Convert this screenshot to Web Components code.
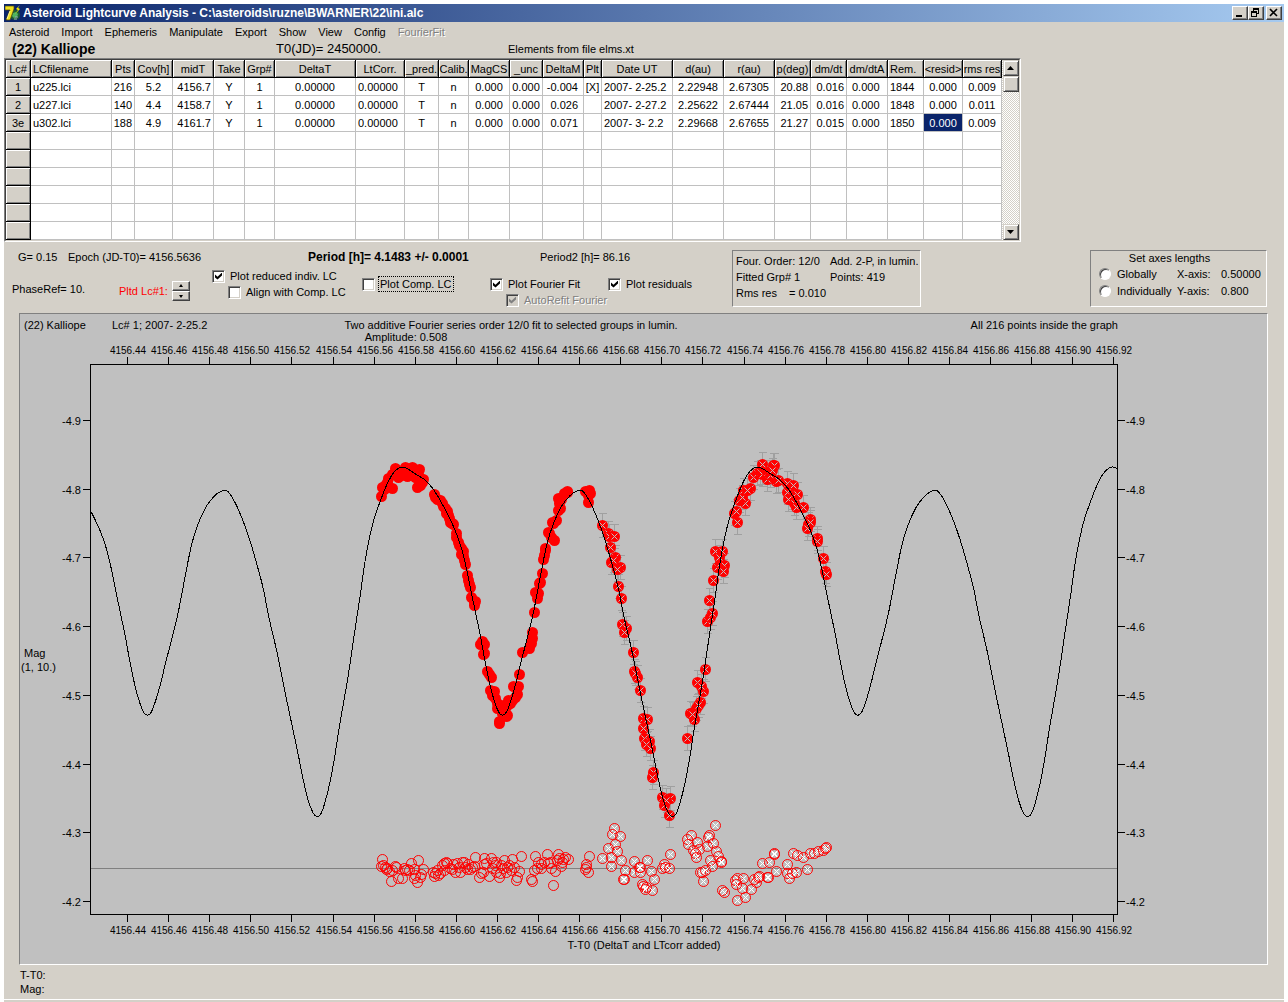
<!DOCTYPE html>
<html lang="en">
<head>
<meta charset="utf-8">
<title>Asteroid Lightcurve Analysis</title>
<style>
  body {
    margin: 0;
    padding: 4px 4px 0;
    background: #fff;
    color: #000;
    font: 11px/14px "Liberation Sans", Arial, sans-serif;
  }
</style>
</head>
<body>
<app-window>
  <title-bar>Asteroid Lightcurve Analysis - C:\asteroids\ruzne\BWARNER\22\ini.alc</title-bar>
  <menu-bar></menu-bar>
  <object-header></object-header>
  <lc-grid></lc-grid>
  <fit-controls></fit-controls>
  <lightcurve-plot></lightcurve-plot>
  <cursor-status></cursor-status>
</app-window>

<script>
// Shared base: renders once into an open shadow root
class BaseElement extends HTMLElement {
  constructor() {
    super();
    this.attachShadow({ mode: "open" });
  }

  connectedCallback() {
    this.shadowRoot.innerHTML = this.template();
  }
}

class AppWindow extends BaseElement {
  template() {
    return `
      <style>
        :host {
          display: flex;
          flex-direction: column;
          background: #d4d0c8;
          padding-bottom: 2px;
        }
      </style>
      <slot></slot>
    `;
  }
}

class TitleBar extends BaseElement {
  template() {
    return `
      <style>
        :host {
          display: flex;
          align-items: center;
          height: 18px;
          padding: 0 2px 0 1px;
          background: linear-gradient(to right, #0a246a, #a6caf0);
          color: #fff;
        }
        .icon { width: 16px; height: 16px; margin-right: 2px; }
        h1 {
          flex: 1;
          margin: 0;
          font: bold 12px/18px "Liberation Sans", Tahoma, sans-serif;
          white-space: nowrap;
        }
        button {
          width: 16px;
          height: 14px;
          padding: 0;
          border: 1px solid;
          border-color: #fff #404040 #404040 #fff;
          box-shadow: inset -1px -1px #808080;
          background: #d4d0c8;
        }
        button svg { display: block; width: 14px; height: 12px; }
        .close { margin-left: 2px; }
      </style>
      <svg class="icon" viewBox="0 0 16 16" aria-hidden="true">
        <circle cx="10" cy="10" r="5" fill="#1c5a34"/>
        <path d="M8 8l3-1 2 2-1 3-3 1-2-2z" fill="#4fb35e"/>
        <path d="M10 12h3M9 14h3" stroke="#9ab" />
        <path d="M0 1h9v3L5 15H1L5 5H0z" fill="#f0e020" stroke="#50480c" stroke-width=".7"/>
        <path d="M5 6L2 14" stroke="#fff7a0"/>
        <path d="M15 0l-4 4 2 1-3 4 5-5-2-1z" fill="#fff200"/>
      </svg>
      <h1><slot></slot></h1>
      <button type="button" aria-label="Minimize"><svg viewBox="0 0 14 12"><path d="M3 8h6v2H3z"/></svg></button>
      <button type="button" aria-label="Restore"><svg viewBox="0 0 14 12" fill-rule="evenodd"><path d="M4 1h6v6H8V6h1V3H5v1H4zM2 4h6v6H2zM3 6v3h4V6z"/></svg></button>
      <button type="button" aria-label="Close" class="close"><svg viewBox="0 0 14 12"><path d="M3 2l7 7M10 2L3 9" stroke="#000" stroke-width="1.6"/></svg></button>
    `;
  }
}

const MENUS = ["Asteroid", "Import", "Ephemeris", "Manipulate", "Export", "Show", "View", "Config", "FourierFit"];

class MenuBar extends BaseElement {
  template() {
    const items = MENUS.map((name) => `<button type="button"${name === "FourierFit" ? " disabled" : ""}>${name}</button>`);
    return `
      <style>
        :host { display: flex; height: 18px; padding-top: 2px; box-sizing: border-box; }
        nav { display: flex; align-items: center; }
        button {
          padding: 0 6px;
          border: 0;
          background: none;
          color: #000;
          font: inherit;
        }
        button:first-child { padding-left: 5px; }
        button:disabled { color: #808080; text-shadow: 1px 1px #fff; }
      </style>
      <nav>${items.join("")}</nav>
    `;
  }
}

class ObjectHeader extends BaseElement {
  template() {
    return `
      <style>
        :host {
          display: grid;
          grid-template-columns: 264px 232px 1fr;
          align-items: center;
          height: 18px;
          padding-left: 8px;
        }
        h2 { margin: 0; font: bold 14px/18px "Liberation Sans", Arial, sans-serif; }
        .epoch { font-size: 13px; line-height: 18px; }
      </style>
      <h2>(22) Kalliope</h2>
      <span class="epoch">T0(JD)= 2450000.</span>
      <span>Elements from file elms.xt</span>
    `;
  }
}

// [header, width, alignment class]
const COLUMNS = [
  ["Lc#", 25, ""],
  ["LCfilename", 81, "left"],
  ["Pts", 23, "right"],
  ["Cov[h]", 38, ""],
  ["midT", 41, "right"],
  ["Take", 31, ""],
  ["Grp#", 30, ""],
  ["DeltaT", 81, ""],
  ["LtCorr.", 49, "left"],
  ["_pred.", 34, ""],
  ["Calib.", 30, ""],
  ["MagCS", 41, ""],
  ["_unc", 33, ""],
  ["DeltaM", 41, "inset-right"],
  ["Plt", 18, ""],
  ["Date UT", 71, "left"],
  ["d(au)", 51, ""],
  ["r(au)", 51, ""],
  ["p(deg)", 36, "right"],
  ["dm/dt", 36, "right"],
  ["dm/dtA", 41, "inset-left"],
  ["Rem.", 36, "left"],
  ["&lt;resid&gt;", 39, ""],
  ["rms res", 39, ""],
];

const ROWS = [
  ["1", "u225.lci", "216", "5.2", "4156.7", "Y", "1", "0.00000", "0.00000", "T", "n", "0.000", "0.000", "-0.004", "[X]", "2007- 2-25.2", "2.22948", "2.67305", "20.88", "0.016", "0.000", "1844", "0.000", "0.009"],
  ["2", "u227.lci", "140", "4.4", "4158.7", "Y", "1", "0.00000", "0.00000", "T", "n", "0.000", "0.000", "0.026", "", "2007- 2-27.2", "2.25622", "2.67444", "21.05", "0.016", "0.000", "1848", "0.000", "0.011"],
  ["3e", "u302.lci", "188", "4.9", "4161.7", "Y", "1", "0.00000", "0.00000", "T", "n", "0.000", "0.000", "0.071", "", "2007- 3- 2.2", "2.29668", "2.67655", "21.27", "0.015", "0.000", "1850", "0.000", "0.009"],
];
const EMPTY_ROWS = 6;
const SELECTED = { row: 2, col: 22 };

class LcGrid extends BaseElement {
  template() {
    const rows = ROWS.concat(Array.from({ length: EMPTY_ROWS }, () => COLUMNS.map(() => "")));
    const cell = (text, r, c) => {
      if (c === 0) return `<th scope="row">${text}</th>`;
      const selected = r === SELECTED.row && c === SELECTED.col ? " selected" : "";
      return `<td class="${COLUMNS[c][2]}${selected}">${text}</td>`;
    };
    return `
      <style>
        :host { display: flex; }
        .frame {
          border: 1px solid;
          border-color: #808080 #fff #fff #808080;
        }
        .inner {
          display: flex;
          border: 1px solid;
          border-color: #404040 #d4d0c8 #d4d0c8 #404040;
          background: #fff;
        }
        table {
          table-layout: fixed;
          width: 996px;
          border-spacing: 0;
          line-height: 16px;
        }
        th, td {
          box-sizing: border-box;
          height: 18px;
          padding: 0;
          font-weight: normal;
          text-align: center;
          white-space: nowrap;
          overflow: hidden;
          border: solid #c0c0c0;
          border-width: 0 1px 1px 0;
        }
        th {
          background: #d4d0c8;
          border-color: #000;
          box-shadow: inset 1px 1px #fff, inset -1px -1px #808080;
        }
        .left { text-align: left; padding-left: 2px; }
        .right { text-align: right; padding-right: 2px; }
        .inset-left { text-align: left; padding-left: 5px; }
        .inset-right { text-align: right; padding-right: 5px; }
        .selected { background: #0a246a; color: #fff; }
        th.head-left { text-align: left; padding-left: 2px; }
      </style>
      <div class="frame"><div class="inner">
        <table>
          <colgroup>${COLUMNS.map(([, width]) => `<col style="width:${width}px">`).join("")}</colgroup>
          <thead><tr>${COLUMNS.map(([name]) => `<th scope="col"${name === "LCfilename" || name === "Rem." ? ' class="head-left"' : ""}>${name}</th>`).join("")}</tr></thead>
          <tbody>${rows.map((row, r) => `<tr>${row.map((text, c) => cell(text, r, c)).join("")}</tr>`).join("")}</tbody>
        </table>
        <scroll-bar></scroll-bar>
      </div></div>
    `;
  }
}

class ScrollBar extends BaseElement {
  template() {
    return `
      <style>
        :host {
          display: flex;
          flex-direction: column;
          width: 16px;
          padding-left: 1px;
          background: repeating-conic-gradient(#fff 0 25%, #d4d0c8 0 50%) 0 0 / 2px 2px;
        }
        button, .thumb {
          box-sizing: border-box;
          width: 16px;
          height: 16px;
          padding: 0;
          border: 1px solid;
          border-color: #d4d0c8 #404040 #404040 #d4d0c8;
          box-shadow: inset 1px 1px #fff, inset -1px -1px #808080;
          background: #d4d0c8;
        }
        svg { display: block; width: 14px; height: 14px; }
        .down { margin-top: auto; }
      </style>
      <button type="button" aria-label="Scroll up"><svg viewBox="0 0 14 14"><path d="M3 9h7L6.500 5z"/></svg></button>
      <div class="thumb"></div>
      <button type="button" class="down" aria-label="Scroll down"><svg viewBox="0 0 14 14"><path d="M3 5h7L6.500 9z"/></svg></button>
    `;
  }
}

class CheckBox extends BaseElement {
  template() {
    const checked = this.hasAttribute("checked") ? "checked" : "";
    const disabled = this.hasAttribute("disabled") ? "disabled" : "";
    return `
      <style>
        :host { display: block; height: 16px; white-space: nowrap; }
        label { display: flex; align-items: center; gap: 4px; }
        input {
          appearance: none;
          box-sizing: border-box;
          width: 13px;
          height: 13px;
          margin: 0;
          border: 1px solid;
          border-color: #808080 #fff #fff #808080;
          box-shadow: inset 1px 1px #404040, inset -1px -1px #d4d0c8;
          background: #fff;
        }
        input:checked::before {
          content: "";
          display: block;
          width: 7px;
          height: 7px;
          margin: 2px;
          background: #000;
          clip-path: polygon(0 28%, 36% 62%, 100% 0, 100% 43%, 36% 100%, 0 71%);
        }
        input:disabled { background: #d4d0c8; }
        input:disabled::before { background: #808080; }
        span { padding: 0 1px; }
        input:disabled + span { color: #808080; text-shadow: 1px 1px #fff; }
        :host([focused]) span { outline: 1px dotted #000; }
      </style>
      <label><input type="checkbox" ${checked} ${disabled}><span><slot></slot></span></label>
    `;
  }
}

class GroupPanel extends BaseElement {
  template() {
    return `
      <style>
        :host {
          display: block;
          box-sizing: border-box;
          height: 57px;
          border: 1px solid;
          border-color: #808080 #fff #fff #808080;
          white-space: nowrap;
        }
      </style>
      <slot></slot>
    `;
  }
}

class SpinButtons extends BaseElement {
  template() {
    return `
      <style>
        :host { display: grid; width: 18px; }
        button {
          height: 10px;
          padding: 0;
          border: 1px solid;
          border-color: #fff #404040 #404040 #fff;
          box-shadow: inset -1px -1px #808080;
          background: #d4d0c8;
        }
        svg { display: block; width: 16px; height: 8px; }
      </style>
      <button type="button" aria-label="Next lightcurve"><svg viewBox="0 0 16 8"><path d="M6 5h4L8 2z"/></svg></button>
      <button type="button" aria-label="Previous lightcurve"><svg viewBox="0 0 16 8"><path d="M6 3h4L8 6z"/></svg></button>
    `;
  }
}

class FitControls extends BaseElement {
  template() {
    return `
      <style>
        :host {
          display: flex;
          align-items: flex-start;
          height: 63px;
          padding: 8px 17px 0 8px;
          white-space: nowrap;
        }
        .left { width: 720px; }
        .values {
          display: grid;
          grid-template-columns: 50px 240px 232px 1fr;
          padding-left: 6px;
        }
        .values b { font-size: 12px; }
        .options {
          display: grid;
          grid-template-columns: 107px 93px 150px 128px 118px 1fr;
          padding-top: 5px;
        }
        .lower { padding-top: 8px; }
        .indent { margin-left: 16px; }
        .phase { padding-top: 13px; }
        .picker {
          display: flex;
          align-items: center;
          align-self: start;
          gap: 4px;
          padding-top: 12px;
          color: #f00;
        }
        .axes { width: 177px; margin-left: auto; }
        .fit { width: 189px; }
        .fit div {
          display: grid;
          grid-template-columns: 94px 1fr;
          padding: 2px 0 0 3px;
          line-height: 16px;
        }
        .fit .rms { grid-template-columns: 53px 1fr; padding-top: 0; }
        .title { text-align: center; padding-right: 18px; }
        .row {
          display: grid;
          grid-template-columns: 78px 44px 1fr;
          align-items: center;
          height: 17px;
          padding-left: 8px;
        }
        .row label { display: flex; align-items: center; gap: 6px; }
        input {
          appearance: none;
          box-sizing: border-box;
          width: 12px;
          height: 12px;
          margin: 0;
          border: 1px solid;
          border-color: #808080 #fff #fff #808080;
          border-radius: 50%;
          box-shadow: inset 1px 1px #404040;
          background: #fff;
        }
      </style>
      <div class="left">
        <div class="values">
          <span>G= 0.15</span>
          <span>Epoch (JD-T0)= 4156.5636</span>
          <b>Period [h]= 4.1483 +/- 0.0001</b>
          <span>Period2 [h]= 86.16</span>
        </div>
        <div class="options">
          <span class="phase">PhaseRef= 10.</span>
          <div class="picker"><span>Pltd Lc#1:</span><spin-buttons></spin-buttons></div>
          <div>
            <check-box checked>Plot reduced indiv. LC</check-box>
            <check-box class="indent">Align with Comp. LC</check-box>
          </div>
          <div class="lower"><check-box focused>Plot Comp. LC</check-box></div>
          <div class="lower">
            <check-box checked>Plot Fourier Fit</check-box>
            <check-box class="indent" checked disabled>AutoRefit Fourier</check-box>
          </div>
          <div class="lower"><check-box checked>Plot residuals</check-box></div>
        </div>
      </div>
      <group-panel class="fit">
        <div>
          <span>Four. Order: 12/0</span><span>Add. 2-P, in lumin.</span>
          <span>Fitted Grp# 1</span><span>Points: 419</span>
        </div>
        <div class="rms"><span>Rms res</span><span>= 0.010</span></div>
      </group-panel>
      <group-panel class="axes">
        <div class="title">Set axes lengths</div>
        <div class="row">
          <label><input type="radio" name="axes">Globally</label><span>X-axis:</span><span>0.50000</span>
        </div>
        <div class="row">
          <label><input type="radio" name="axes">Individually</label><span>Y-axis:</span><span>0.800</span>
        </div>
      </group-panel>
    `;
  }
}

// Plot geometry
const AREA = { left: 90, right: 1117, top: 364, bottom: 914 };
const ZERO_LINE = 868;
const PERIOD = 355.2;

// One period of the Fourier fit
const FIT = [
  [317, 816.5], [320.8, 814], [324.8, 803], [329.8, 783], [334.8, 756], [338.8, 730], [343.5, 703],
  [348, 677], [352, 650], [356, 623], [360.3, 595], [364, 568], [368, 545], [373.5, 521], [380.7, 500],
  [388.3, 481.5], [395, 471], [401.7, 467], [408.3, 469.3], [416.7, 474.7], [425, 480], [433.3, 489.3],
  [443.3, 506], [455, 530], [461.7, 549], [467, 571], [473.3, 602], [480, 634], [485, 661], [490, 685],
  [495, 703], [499, 712.5], [502.7, 715.3], [506.7, 711.7], [511.7, 698], [516.7, 680], [520.5, 664],
  [526.7, 640], [533.3, 613], [540, 578.3], [546.7, 545], [553.3, 524], [561.7, 506], [570, 495.7],
  [575, 492], [579.3, 490.5], [583.3, 491.7], [590, 502], [598.3, 521], [605, 540], [611.7, 563],
  [618.3, 588], [624, 617], [631.7, 650], [640, 691], [648, 729], [653.3, 754], [658.3, 779], [663.3, 800],
  [668.3, 813],
];

// First set: plain dots
const DOTS = [
  [381,496],[382,487],[385,485],[387,482],[389,487],[392,488],[388,478],[392,474],[395,468],[396,472],[398,477],
  [401,475],[405,467],[407,476],[403,472],[408,470],[412,467],[410,475],[413,473],[415,477],[419,469],[418,474],
  [420,478],[422,482],[423,479],[417,487],[420,485],[419,481],[384,489],[434,494],[435,497],[437,499],[440,500],
  [442,503],[443,506],[445,508],[447,511],[446,513],[448,515],[450,522],[452,523],[453,524],[449,518],[456,533],
  [456,537],[458,542],[459,545],[461,548],[463,551],[461,554],[463,556],[464,560],[465,564],[467,575],[468,580],
  [469,584],[470,587],[471,597],[474,602],[474,605],[475,601],[482,641],[480,644],[484,644],[484,653],[483,654],
  [487,671],[489,674],[491,677],[490,690],[494,691],[492,695],[495,698],[497,703],[497,708],[500,707],[503,705],
  [507,705],[503,708],[502,712],[506,716],[505,712],[508,700],[512,700],[510,703],[499,723],[499,721],[507,715],
  [502,713],[517,694],[515,697],[513,686],[518,686],[519,674],[522,652],[529,648],[531,643],[532,638],[532,632],
  [534,612],[537,598],[535,592],[538,593],[539,583],[540,582],[542,573],[543,559],[544,555],[545,550],[545,548],
  [549,533],[548,532],[554,540],[551,537],[552,522],[556,520],[553,523],[558,510],[560,508],[559,503],[558,498],
  [561,499],[564,493],[567,492],[567,491],[585,491],[589,490],[588,495],[588,502],[590,493],
];

// Second set: crossed dots with error bars
const CROSSED = [
  [602,525],[608,533],[609,536],[614,536],[610,547],[615,557],[611,562],[613,560],[620,567],[617,569],[618,586],
  [621,598],[622,624],[626,628],[624,632],[633,652],[634,671],[637,677],[635,673],[640,690],[643,718],[647,719],
  [643,728],[644,738],[649,741],[646,744],[650,748],[653,772],[652,777],[662,797],[664,805],[670,798],[669,815],
  [666,800],[687,738],[690,713],[694,719],[696,708],[692,714],[700,702],[698,705],[697,682],[703,691],[701,686],
  [705,669],[707,621],[710,617],[712,613],[709,600],[713,580],[717,567],[720,563],[724,565],[723,571],[715,551],
  [722,551],[719,557],[737,522],[734,513],[736,511],[739,500],[745,503],[742,497],[743,490],[750,488],[747,490],
  [753,477],[757,473],[760,472],[762,464],[762,474],[767,479],[767,472],[770,475],[773,465],[774,465],[772,470],
  [776,481],[778,480],[787,483],[793,485],[787,492],[797,494],[792,497],[788,499],[794,503],[796,507],[803,507],
  [810,519],[808,524],[807,528],[810,522],[817,538],[817,541],[823,558],[825,571],[826,574],
];

const RESIDUALS = [
  [382,859],[381,866],[383,865],[386,869],[385,867],[389,871],[387,868],[391,881],[392,870],[395,866],[396,867],
  [398,878],[402,878],[404,868],[407,869],[405,870],[411,863],[409,870],[414,869],[418,860],[415,875],[414,878],
  [417,882],[420,877],[421,874],[423,869],[434,876],[433,872],[435,873],[437,870],[438,875],[440,873],[442,865],
  [444,870],[444,863],[446,862],[447,863],[450,868],[453,864],[452,869],[455,872],[457,863],[460,872],[459,867],
  [462,862],[464,862],[465,867],[467,869],[468,864],[470,869],[472,867],[475,857],[474,866],[479,877],[481,873],
  [484,858],[484,864],[483,872],[486,863],[489,876],[491,858],[492,868],[493,862],[495,865],[496,862],[496,872],
  [499,877],[500,873],[501,865],[504,860],[503,868],[506,872],[507,867],[509,865],[511,870],[512,859],[514,867],
  [516,880],[517,877],[519,871],[521,856],[531,879],[532,881],[534,870],[535,856],[538,862],[537,868],[541,864],
  [541,868],[544,862],[547,854],[548,863],[551,868],[550,862],[553,885],[555,871],[557,860],[558,854],[559,858],
  [561,866],[562,862],[563,859],[565,857],[568,859],[589,856],[586,864],[586,867],[588,872],[585,869],
];

const CROSSED_RESIDUALS = [
  [614,828],[612,834],[620,836],[615,844],[608,848],[617,851],[611,857],[602,858],[611,866],[621,860],[625,870],
  [624,879],[623,879],[634,861],[634,872],[640,872],[639,867],[640,867],[647,860],[651,871],[654,879],[642,884],
  [643,886],[646,887],[645,889],[652,890],[670,854],[664,864],[662,868],[665,867],[669,868],[715,825],[691,835],
  [687,839],[688,844],[697,842],[709,835],[708,837],[699,849],[693,850],[695,853],[696,857],[707,846],[713,843],
  [716,851],[718,856],[721,861],[721,862],[710,860],[712,866],[700,872],[702,872],[705,870],[703,881],[722,890],
  [724,892],[737,900],[745,897],[742,888],[735,880],[737,878],[743,878],[736,884],[751,889],[756,882],[754,879],
  [759,876],[758,877],[767,877],[768,877],[762,863],[769,862],[774,854],[774,853],[776,871],[787,864],[787,873],
  [789,878],[792,873],[796,872],[807,869],[793,853],[797,855],[803,857],[810,853],[814,853],[818,851],[823,850],
  [825,848],[826,847],
];

class LightcurvePlot extends BaseElement {
  curvePath() {
    const points = [];
    for (let cycle = -1; cycle <= 3; cycle++) {
      FIT.forEach(([x, y]) => points.push([x + cycle * PERIOD, y]));
    }
    // Catmull-Rom converted to cubic segments
    let d = `M${points[1]}`;
    for (let i = 1; i < points.length - 2; i++) {
      const [p0, p1, p2, p3] = points.slice(i - 1, i + 3);
      const c1 = [p1[0] + (p2[0] - p0[0]) / 6, p1[1] + (p2[1] - p0[1]) / 6];
      const c2 = [p2[0] - (p3[0] - p1[0]) / 6, p2[1] - (p3[1] - p1[1]) / 6];
      d += `C${c1} ${c2} ${p2}`;
    }
    return d;
  }

  axes() {
    const { left, right, top, bottom } = AREA;
    let ticks = "";
    let labels = "";
    for (let i = 0; i <= 24; i++) {
      const x = Math.round(127 + i * 41.1);
      const text = (4156.44 + i * 0.02).toFixed(2);
      ticks += `M${x + 0.5} ${top}v-7M${x + 0.5} ${bottom + 1}v7`;
      labels += `<text x="${x + 1}" y="354" class="mid time">${text}</text><text x="${x + 1}" y="934" class="mid time">${text}</text>`;
    }
    for (let i = 0; i <= 7; i++) {
      const y = Math.round(420 + i * 68.7);
      const text = (-4.9 + i * 0.1).toFixed(1);
      ticks += `M${left} ${y + 0.5}h-7M${right + 1} ${y + 0.5}h7`;
      labels += `<text x="81" y="${y + 5}" class="end">${text}</text><text x="1126" y="${y + 5}">${text}</text>`;
    }
    return `<path class="line" d="M${left + 0.5} ${top + 0.5}H${right + 0.5}V${bottom + 0.5}H${left + 0.5}z${ticks}"/>${labels}`;
  }

  template() {
    const cross = ([x, y], r) => `M${x - r} ${y - r}l${2 * r} ${2 * r}M${x + r} ${y - r}l${-2 * r} ${2 * r}`;
    const bars = CROSSED.map(([x, y]) => `M${x} ${y - 12}v24M${x - 4} ${y - 12}h8M${x - 4} ${y + 12}h8`).join("");
    const dot = ([x, y]) => `<circle cx="${x}" cy="${y}" r="5.500"/>`;
    const ring = ([x, y]) => `<circle cx="${x}" cy="${y}" r="5"/>`;
    return `
      <style>
        :host {
          display: block;
          margin: 0 16px 0 15px;
          border: 1px solid;
          border-color: #808080 #fff #fff #808080;
          background: #c0c0c0;
        }
        svg { display: block; width: 100%; height: auto; }
        text { font-size: 11px; white-space: pre; }
        .time { font-size: 10px; }
        .mid { text-anchor: middle; }
        .end { text-anchor: end; }
        path { fill: none; }
        .line, .curve, .zero, .bars { shape-rendering: crispEdges; }
        .line, .curve { stroke: #000; }
        .zero { stroke: #808080; }
        .bars { stroke: #a0a0a0; }
        .dots { fill: #f00; }
        .rings { fill: none; stroke: #f00; }
        .dots path { stroke: #c0c0c0; }
        .rings path { stroke: #fff; }
      </style>
      <svg viewBox="20 314 1247 650" role="img" aria-label="Lightcurve of (22) Kalliope">
        <clipPath id="area"><rect x="90" y="364" width="1028" height="551"/></clipPath>
        <text x="24" y="329">(22) Kalliope</text>
        <text x="112" y="329">Lc# 1; 2007- 2-25.2</text>
        <text x="511" y="329" class="mid">Two additive Fourier series order 12/0 fit to selected groups in lumin.</text>
        <text x="406" y="341" class="mid">Amplitude: 0.508</text>
        <text x="1118" y="329" class="end">All 216 points inside the graph</text>
        <text x="24" y="657">Mag</text>
        <text x="21" y="671">(1, 10.)</text>
        <text x="644" y="949" class="mid">T-T0 (DeltaT and LTcorr added)</text>
        <path class="zero" d="M91 ${ZERO_LINE + 0.5}H1117"/>
        ${this.axes()}
        <path class="bars" transform="translate(.5 .5)" d="${bars}"/>
        <g class="dots" transform="translate(.5 .5)">
          ${DOTS.map(dot).join("")}
          ${CROSSED.map((p) => dot(p) + `<path d="${cross(p, 3)}"/>`).join("")}
        </g>
        <g class="rings" transform="translate(.5 .5)">
          ${RESIDUALS.map(ring).join("")}
          ${CROSSED_RESIDUALS.map((p) => ring(p) + `<path d="${cross(p, 3)}"/>`).join("")}
        </g>
        <path class="curve" clip-path="url(#area)" d="${this.curvePath()}"/>
      </svg>
    `;
  }
}

class CursorStatus extends BaseElement {
  template() {
    return `
      <style>
        :host {
          display: block;
          height: 31px;
          padding: 3px 0 0 16px;
          border-bottom: 1px solid #fff;
        }
      </style>
      <div>T-T0:</div>
      <div>Mag:</div>
    `;
  }
}

customElements.define("app-window", AppWindow);
customElements.define("title-bar", TitleBar);
customElements.define("menu-bar", MenuBar);
customElements.define("object-header", ObjectHeader);
customElements.define("scroll-bar", ScrollBar);
customElements.define("lc-grid", LcGrid);
customElements.define("check-box", CheckBox);
customElements.define("group-panel", GroupPanel);
customElements.define("spin-buttons", SpinButtons);
customElements.define("fit-controls", FitControls);
customElements.define("lightcurve-plot", LightcurvePlot);
customElements.define("cursor-status", CursorStatus);
</script>
</body>
</html>
